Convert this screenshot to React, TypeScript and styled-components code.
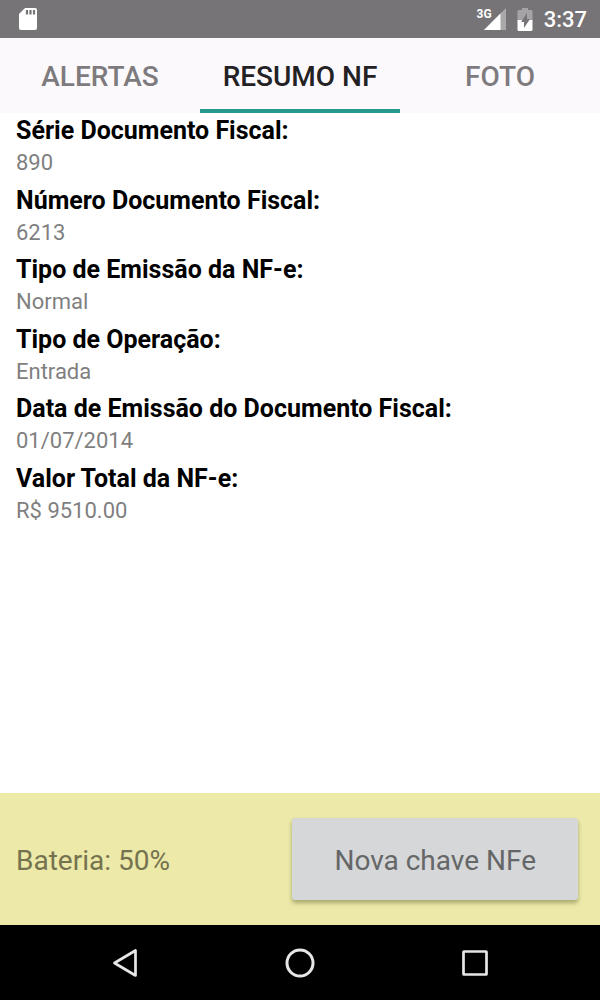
import React, { useState } from "react";
import styled, { createGlobalStyle } from "styled-components";

const GlobalStyle = createGlobalStyle`
  *, *::before, *::after { box-sizing: border-box; }
  body {
    margin: 0;
    background: #ffffff;
    font-family: Roboto, "Noto Sans", sans-serif;
  }
`;

const Screen = styled.div`
  display: flex;
  flex-direction: column;
  min-height: 100vh;
`;

const StatusBar = styled.header`
  display: flex;
  align-items: center;
  justify-content: space-between;
  height: 38px;
  padding: 0 13px 0 18px;
  background: #767476;
  color: #ffffff;
`;

const StatusIcons = styled.div`
  display: flex;
  align-items: center;
  gap: 11px;
`;

const Signal = styled.div`
  display: flex;
  align-items: center;
`;

const NetworkType = styled.span`
  align-self: flex-start;
  margin-right: -8px;
  font-size: 12px;
  line-height: 12px;
  font-weight: 700;
`;

const Clock = styled.time`
  padding-top: 2px;
  font-size: 22px;
  line-height: 36px;
  font-weight: 500;
`;

const TabBar = styled.nav`
  display: flex;
  height: 75px;
  background: #fbf9fc;
`;

const Tab = styled.button<{ $active: boolean }>`
  flex: 1 1 0;
  padding: 6px 0 0;
  border: 0;
  border-bottom: 4px solid ${(p) => (p.$active ? "#26998e" : "transparent")};
  background: none;
  color: ${(p) => (p.$active ? "#232124" : "#7d7b7e")};
  font-family: inherit;
  font-size: 28px;
  line-height: 32px;
  font-weight: 500;
  text-transform: uppercase;
  cursor: pointer;
`;

const Main = styled.main`
  flex: 1;
  padding: 0 16px 16px;
`;

const Summary = styled.dl`
  display: flex;
  flex-direction: column;
  justify-content: space-between;
  min-height: 411px;
  margin: 0;
`;

const FieldName = styled.dt`
  color: #000000;
  font-size: 25px;
  line-height: 36px;
  font-weight: 700;
`;

const FieldValue = styled.dd`
  margin: 0;
  color: #7f7f7f;
  font-size: 22px;
  line-height: 27px;
`;

const Footer = styled.footer`
  display: flex;
  align-items: center;
  justify-content: space-between;
  height: 132px;
  padding: 0 22px 0 16px;
  background: #ece9a9;
`;

const Battery = styled.span`
  padding-top: 4px;
  color: #75734f;
  font-size: 28px;
  line-height: 32px;
`;

const NewKeyButton = styled.button`
  height: 82px;
  padding: 4px 42px 0;
  border: 0;
  border-radius: 3px;
  background: #d6d7d8;
  box-shadow: 0 3px 4px rgba(70, 70, 20, 0.4);
  color: #656667;
  font-family: inherit;
  font-size: 28px;
  line-height: 32px;
  cursor: pointer;
`;

const SystemBar = styled.nav`
  display: flex;
  align-items: center;
  justify-content: center;
  height: 75px;
  background: #000000;
`;

const SystemButton = styled.button`
  display: flex;
  align-items: center;
  justify-content: center;
  width: 175px;
  max-width: 33%;
  height: 75px;
  padding: 0;
  border: 0;
  background: none;
  color: #e8e6e8;
  cursor: pointer;
`;

const SdCardIcon = () => (
  <svg width="20" height="24" viewBox="0 0 20 24" aria-hidden="true">
    <path d="M7 1H17Q19 1 19 3V21Q19 23 17 23H3Q1 23 1 21V7Z" fill="#fff" />
    <path d="M9 3V7.5M12.5 3V7.5M16 3V7.5" stroke="#767476" strokeWidth="2.2" />
  </svg>
);

const SignalIcon = () => (
  <svg width="22" height="22" viewBox="0 0 22 22" aria-hidden="true">
    <path d="M0 22L22 0V22Z" fill="#aaa8aa" />
    <path d="M0 22L16.5 5.5V22Z" fill="#fff" />
  </svg>
);

const BatteryIcon = () => (
  <svg width="16" height="23" viewBox="0 0 16 23" aria-hidden="true">
    <path d="M5 0H11V2H14Q15.5 2 15.5 3.5V12H0.5V3.5Q0.5 2 2 2H5Z" fill="#a5a3a5" />
    <path d="M0.5 12H15.5V21.5Q15.5 23 14 23H2Q0.5 23 0.5 21.5Z" fill="#fff" />
    <path d="M10 5L4 14H7V20L13 11H10Z" fill="#767476" />
  </svg>
);

const BackIcon = () => (
  <svg width="30" height="32" viewBox="0 0 30 32" aria-hidden="true">
    <path d="M4.5 16L25.5 3.5V28.5Z" fill="none" stroke="currentColor" strokeWidth="2.7" strokeLinejoin="round" />
  </svg>
);

const HomeIcon = () => (
  <svg width="32" height="32" viewBox="0 0 32 32" aria-hidden="true">
    <circle cx="16" cy="16" r="13" fill="none" stroke="currentColor" strokeWidth="3" />
  </svg>
);

const RecentsIcon = () => (
  <svg width="30" height="30" viewBox="0 0 30 30" aria-hidden="true">
    <rect x="3.5" y="3.5" width="23" height="23" rx="0.5" fill="none" stroke="currentColor" strokeWidth="2.7" />
  </svg>
);

const tabs = ["Alertas", "Resumo NF", "Foto"];

const fields = [
  { name: "Série Documento Fiscal:", value: "890" },
  { name: "Número Documento Fiscal:", value: "6213" },
  { name: "Tipo de Emissão da NF-e:", value: "Normal" },
  { name: "Tipo de Operação:", value: "Entrada" },
  { name: "Data de Emissão do Documento Fiscal:", value: "01/07/2014" },
  { name: "Valor Total da NF-e:", value: "R$ 9510.00" },
];

export default function App() {
  const [active, setActive] = useState("Resumo NF");

  return (
    <>
      <GlobalStyle />
      <Screen>
        <StatusBar>
          <SdCardIcon />
          <StatusIcons>
            <Signal>
              <NetworkType>3G</NetworkType>
              <SignalIcon />
            </Signal>
            <BatteryIcon />
            <Clock>3:37</Clock>
          </StatusIcons>
        </StatusBar>
        <TabBar>
          {tabs.map((tab) => (
            <Tab key={tab} type="button" $active={tab === active} onClick={() => setActive(tab)}>
              {tab}
            </Tab>
          ))}
        </TabBar>
        <Main>
          <Summary>
            {fields.map((field) => (
              <div key={field.name}>
                <FieldName>{field.name}</FieldName>
                <FieldValue>{field.value}</FieldValue>
              </div>
            ))}
          </Summary>
        </Main>
        <Footer>
          <Battery>Bateria: 50%</Battery>
          <NewKeyButton type="button">Nova chave NFe</NewKeyButton>
        </Footer>
        <SystemBar>
          <SystemButton type="button" aria-label="Voltar">
            <BackIcon />
          </SystemButton>
          <SystemButton type="button" aria-label="Início">
            <HomeIcon />
          </SystemButton>
          <SystemButton type="button" aria-label="Recentes">
            <RecentsIcon />
          </SystemButton>
        </SystemBar>
      </Screen>
    </>
  );
}
